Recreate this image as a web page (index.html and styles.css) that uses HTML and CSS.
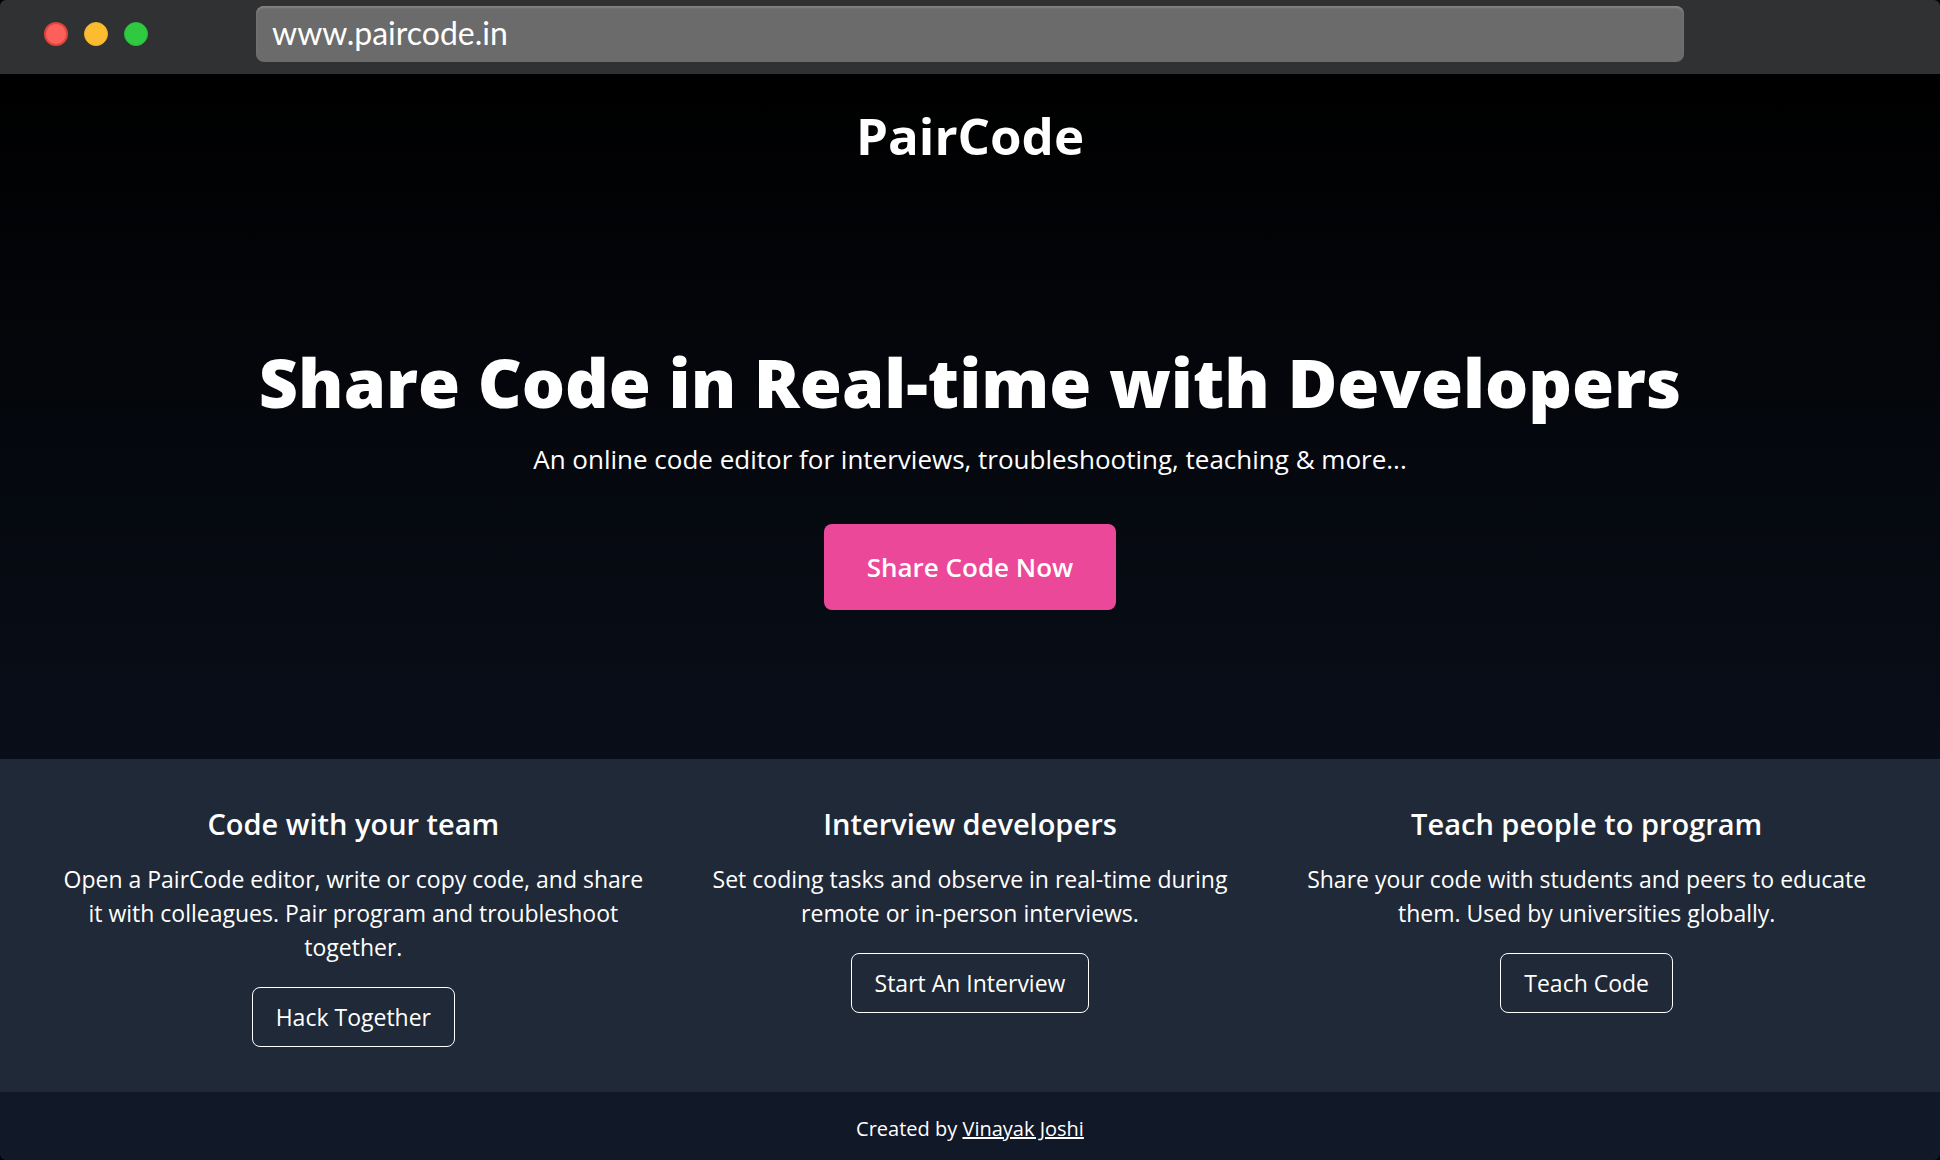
FILE: index.html
```html
<!DOCTYPE html>
<html lang="en">
<head>
<meta charset="utf-8">
<title>PairCode</title>
<link rel="stylesheet" href="styles.css">
</head>
<body>
<div class="window">
  <div class="toolbar">
    <div class="lights">
      <span class="light light-close"></span>
      <span class="light light-minimize"></span>
      <span class="light light-zoom"></span>
    </div>
    <input class="address" type="text" aria-label="Address" value="www.paircode.in">
  </div>
  <header class="hero">
    <div class="brand">PairCode</div>
    <div class="pitch">
      <h1 class="headline">Share Code in Real-time with Developers</h1>
      <p class="tagline">An online code editor for interviews, troubleshooting, teaching &amp; more...</p>
      <button class="cta" type="button">Share Code Now</button>
    </div>
  </header>
  <main class="features">
    <section class="feature">
      <h2 class="feature-title">Code with your team</h2>
      <p class="feature-text">Open a PairCode editor, write or copy code, and share it with colleagues. Pair program and troubleshoot together.</p>
      <button class="feature-button" type="button">Hack Together</button>
    </section>
    <section class="feature">
      <h2 class="feature-title">Interview developers</h2>
      <p class="feature-text">Set coding tasks and observe in real-time during remote or in-person interviews.</p>
      <button class="feature-button" type="button">Start An Interview</button>
    </section>
    <section class="feature">
      <h2 class="feature-title">Teach people to program</h2>
      <p class="feature-text">Share your code with students and peers to educate them. Used by universities globally.</p>
      <button class="feature-button" type="button">Teach Code</button>
    </section>
  </main>
  <footer class="footer">Created by <a class="author" href="#">Vinayak Joshi</a></footer>
</div>
</body>
</html>
```

FILE: styles.css
```css
* {
  box-sizing: border-box;
  margin: 0;
}

body {
  background: #000;
  color: #fff;
  font-family: "Open Sans", "Noto Sans", sans-serif;
}

button {
  font-family: inherit;
  color: inherit;
  cursor: pointer;
}

.window {
  display: flex;
  flex-direction: column;
  min-height: 100vh;
  overflow: hidden;
  border-radius: 6px;
}

.toolbar {
  display: grid;
  grid-template-columns: 256px 1fr 256px;
  align-items: start;
  height: 74px;
  padding-top: 6px;
  background: #303133;
}

.lights {
  display: flex;
  gap: 16px;
  padding: 16px 0 0 44px;
}

.light {
  width: 24px;
  height: 24px;
  border-radius: 50%;
}

.light-close {
  background: #fc605b;
  border: 2px solid #e0443e;
}

.light-minimize {
  background: #fdbc2f;
  border: 1px solid #efb02d;
}

.light-zoom {
  background: #30ca42;
  border: 1px solid #2cbc3d;
}

.address {
  width: 100%;
  height: 56px;
  padding: 0 16px 4px;
  border: 0;
  border-radius: 8px;
  background: #6b6b6b;
  box-shadow: inset 0 2px 2px #858383;
  color: #fff;
  font-family: Lato, sans-serif;
  font-size: 32px;
}

.hero {
  display: flex;
  flex: 1;
  flex-direction: column;
  text-align: center;
  background: linear-gradient(#000, #090e19);
}

.brand {
  padding-top: 33px;
  font-size: 51px;
  font-weight: 700;
  line-height: 57px;
}

.pitch {
  display: flex;
  flex: 1;
  flex-direction: column;
  align-items: center;
  justify-content: center;
  padding-top: 34px;
}

.headline {
  font-size: 68px;
  font-weight: 800;
  line-height: 68px;
}

.tagline {
  margin-top: 23px;
  font-size: 26px;
  line-height: 40px;
}

.cta {
  margin-top: 45px;
  padding: 23px 43px;
  border: 0;
  border-radius: 8px;
  background: #ec4899;
  font-size: 26px;
  font-weight: 600;
  line-height: 40px;
}

.features {
  display: grid;
  grid-template-columns: repeat(3, 1fr);
  padding: 45px;
  background: #1f2937;
}

.feature {
  padding: 0 16px;
  text-align: center;
}

.feature-title {
  font-size: 29px;
  font-weight: 600;
  line-height: 40px;
}

.feature-text {
  margin-top: 18px;
  font-size: 23px;
  line-height: 34px;
}

.feature-button {
  margin-top: 23px;
  padding: 12px 23px;
  border: 1px solid #fff;
  border-radius: 8px;
  background: transparent;
  font-size: 23px;
  line-height: 34px;
}

.footer {
  padding: 23px 16px 17px;
  background: #111827;
  font-size: 20px;
  line-height: 28px;
  text-align: center;
}

.author {
  color: inherit;
}
```
